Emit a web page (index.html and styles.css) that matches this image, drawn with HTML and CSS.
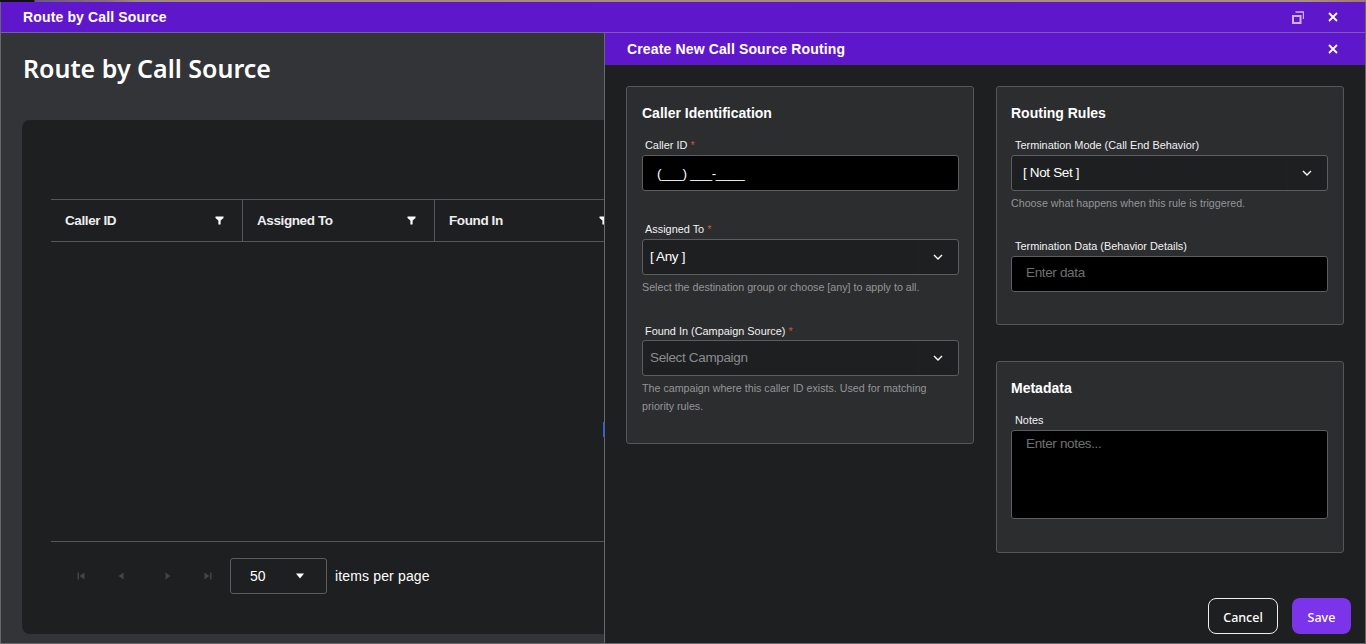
FILE: index.html
```html
<!DOCTYPE html>
<html lang="en">

<head>
    <meta charset="UTF-8">
    <meta name="viewport" content="width=device-width, initial-scale=1.0">
    <title>Route by Call Source</title>
    <link rel="stylesheet" href="styles.css">
</head>

<body>
    <div class="top-strip"></div>
    <div class="window">
        <!-- Window title bar -->
        <div class="title-bar">
            <span class="title-text">Route by Call Source</span>
            <div class="title-actions">
                <svg class="icon-restore" width="12" height="13" viewBox="0 0 12 13" fill="none" stroke="#cbb4f0">
                    <rect x="1" y="5" width="7.5" height="7" stroke-width="2"></rect>
                    <path d="M3.5 1H11.5V8" stroke-width="1.4"></path>
                </svg>
                <svg class="icon-close" width="10" height="10" viewBox="0 0 10 10" fill="none" stroke="#fff" stroke-width="1.8">
                    <path d="M1 1L9 9M9 1L1 9"></path>
                </svg>
            </div>
        </div>

        <div class="window-body">
            <!-- Page behind the panel -->
            <div class="page">
                <h1 class="page-title">Route by Call Source</h1>
                <div class="table-card">
                    <div class="table-head">
                        <div class="head-cell"><span>Caller ID</span>
                            <svg width="9" height="9" viewBox="0 0 9 9" fill="#fff"><path d="M0.5 0.5H8.5V2L5.6 4.6V8.5H3.4V4.6L0.5 2Z"></path></svg>
                        </div>
                        <div class="head-cell"><span>Assigned To</span>
                            <svg width="9" height="9" viewBox="0 0 9 9" fill="#fff"><path d="M0.5 0.5H8.5V2L5.6 4.6V8.5H3.4V4.6L0.5 2Z"></path></svg>
                        </div>
                        <div class="head-cell"><span>Found In</span>
                            <svg width="9" height="9" viewBox="0 0 9 9" fill="#fff"><path d="M0.5 0.5H8.5V2L5.6 4.6V8.5H3.4V4.6L0.5 2Z"></path></svg>
                        </div>
                    </div>
                    <div class="table-empty"></div>
                    <div class="pager">
                        <div class="pager-btns">
                            <svg width="8" height="8" viewBox="0 0 8 8" fill="#444"><path d="M0.5 0.5H2V7.5H0.5ZM7.5 0.5V7.5L2.5 4Z"></path></svg>
                            <svg width="8" height="8" viewBox="0 0 8 8" fill="#444"><path d="M6.5 0.5V7.5L1.5 4Z"></path></svg>
                            <svg class="pager-next" width="8" height="8" viewBox="0 0 8 8" fill="#444"><path d="M1.5 0.5V7.5L6.5 4Z"></path></svg>
                            <svg width="8" height="8" viewBox="0 0 8 8" fill="#444"><path d="M6 0.5H7.5V7.5H6ZM0.5 0.5V7.5L5.5 4Z"></path></svg>
                        </div>
                        <div class="page-size">
                            <span>50</span>
                            <svg width="8" height="6" viewBox="0 0 8 6" fill="#fff"><path d="M0 0.5H8L4 5.5Z"></path></svg>
                        </div>
                        <span class="pager-label">items per page</span>
                    </div>
                </div>
            </div>

            <!-- Slide over panel -->
            <div class="panel">
                <div class="panel-head">
                    <span class="title-text">Create New Call Source Routing</span>
                    <svg class="icon-close" width="10" height="10" viewBox="0 0 10 10" fill="none" stroke="#fff" stroke-width="1.8">
                        <path d="M1 1L9 9M9 1L1 9"></path>
                    </svg>
                </div>
                <div class="panel-content">
                    <div class="panel-col">
                        <section class="form-card card-caller">
                            <h3>Caller Identification</h3>
                            <div class="field">
                                <label>Caller ID <b>*</b></label>
                                <div class="input masked">(___) ___-____</div>
                            </div>
                            <div class="field field-assigned">
                                <label>Assigned To <b>*</b></label>
                                <div class="select">
                                    <span>[ Any ]</span>
                                    <div class="select-arrow"><svg width="10" height="6" viewBox="0 0 10 6" fill="none" stroke="#fff" stroke-width="1.4"><path d="M1 1L5 5L9 1"></path></svg></div>
                                </div>
                                <p class="hint">Select the destination group or choose [any] to apply to all.</p>
                            </div>
                            <div class="field field-found">
                                <label>Found In (Campaign Source) <b>*</b></label>
                                <div class="select">
                                    <span class="placeholder">Select Campaign</span>
                                    <div class="select-arrow"><svg width="10" height="6" viewBox="0 0 10 6" fill="none" stroke="#fff" stroke-width="1.4"><path d="M1 1L5 5L9 1"></path></svg></div>
                                </div>
                                <p class="hint">The campaign where this caller ID exists. Used for matching priority rules.</p>
                            </div>
                        </section>
                    </div>
                    <div class="panel-col panel-col-right">
                        <section class="form-card card-rules">
                            <h3>Routing Rules</h3>
                            <div class="field">
                                <label>Termination Mode (Call End Behavior)</label>
                                <div class="select select-wide">
                                    <span>[ Not Set ]</span>
                                    <div class="select-arrow"><svg width="10" height="6" viewBox="0 0 10 6" fill="none" stroke="#fff" stroke-width="1.4"><path d="M1 1L5 5L9 1"></path></svg></div>
                                </div>
                                <p class="hint">Choose what happens when this rule is triggered.</p>
                            </div>
                            <div class="field field-data">
                                <label>Termination Data (Behavior Details)</label>
                                <div class="input placeholder">Enter data</div>
                            </div>
                        </section>
                        <section class="form-card card-meta">
                            <h3>Metadata</h3>
                            <div class="field">
                                <label>Notes</label>
                                <div class="input textarea placeholder">Enter notes...</div>
                            </div>
                        </section>
                    </div>
                </div>
                <div class="panel-foot">
                    <button class="btn btn-cancel">Cancel</button>
                    <button class="btn btn-save">Save</button>
                </div>
            </div>
            <div class="panel-sliver"></div>
        </div>
    </div>
</body>

</html>
```

FILE: styles.css
```css
* {
    margin: 0;
    padding: 0;
    box-sizing: border-box;
}

body {
    width: 1366px;
    height: 644px;
    overflow: hidden;
    background-color: #333438;
    color: #fff;
    font-family: "Liberation Sans", Arial, sans-serif;
}

.top-strip {
    height: 2px;
    background: linear-gradient(to right, #111 0, #111 34px, #6b5a80 35px, #8a6f7c 110px, #a08a78 135px, #a89180 1300px, #a07a70 100%);
}

.window {
    height: 642px;
    display: flex;
    flex-direction: column;
    border: 1px solid #68696c;
    border-top: none;
}

.title-bar {
    height: 31px;
    flex: none;
    display: flex;
    align-items: center;
    justify-content: space-between;
    padding: 0 27px 0 22px;
    background-color: #5f17cb;
    border-bottom: 1px solid #7a5bb0;
}

.title-text {
    font-size: 14px;
    font-weight: bold;
    letter-spacing: 0.14px;
}

.title-actions {
    display: flex;
    align-items: center;
    gap: 24px;
}

.window-body {
    flex: 1;
    position: relative;
    min-height: 0;
}

.page {
    height: 100%;
    padding: 19px 21px 9px 22px;
    display: flex;
    flex-direction: column;
}

.page-title {
    font-family: "Noto Sans", sans-serif;
    font-size: 25px;
    font-weight: 600;
    line-height: 32px;
    margin-bottom: 36px;
}

.table-card {
    flex: 1;
    margin-left: -1px;
    background-color: #1e1f21;
    border-radius: 8px;
    padding: 79px 29px 0;
    display: flex;
    flex-direction: column;
}

.table-head {
    height: 43px;
    flex: none;
    display: flex;
    border-top: 1px solid #55565a;
    border-bottom: 1px solid #55565a;
}

.head-cell {
    width: 192px;
    display: flex;
    align-items: center;
    justify-content: space-between;
    padding: 0 18px 1px 14px;
    border-right: 1px solid #55565a;
    font-size: 13.5px;
    font-weight: bold;
    letter-spacing: -0.4px;
    color: #eee;
}

.table-empty {
    flex: 1;
}

.pager {
    height: 93px;
    flex: none;
    display: flex;
    align-items: flex-start;
    padding-top: 16px;
    border-top: 1px solid #55565a;
}

.pager-btns {
    width: 179px;
    height: 36px;
    display: flex;
    align-items: center;
    gap: 32px;
    padding-left: 26px;
}

.pager-next {
    margin-left: 7px;
}

.page-size {
    width: 97px;
    height: 36px;
    display: flex;
    align-items: center;
    justify-content: space-between;
    padding: 0 22px 0 19px;
    border: 1px solid #5c5d60;
    border-radius: 3px;
    font-size: 14px;
}

.pager-label {
    font-size: 14px;
    letter-spacing: 0.15px;
    line-height: 36px;
    margin-left: 8px;
}

.panel {
    position: absolute;
    top: 0;
    left: 603px;
    right: 0;
    bottom: 0;
    display: flex;
    flex-direction: column;
    background-color: #1e1f21;
    border-left: 1px solid #68696c;
}

.panel-head {
    height: 32px;
    flex: none;
    display: flex;
    align-items: center;
    justify-content: space-between;
    padding: 0 27px 0 22px;
    background-color: #5f17cb;
}

.panel-content {
    flex: 1;
    display: flex;
    gap: 22px;
    padding: 21px 0 0 21px;
}

.panel-col {
    width: 348px;
    flex: none;
    display: flex;
    flex-direction: column;
    gap: 36px;
}

.form-card {
    padding: 18px 14px 0 15px;
    background-color: #2c2d2f;
    border: 1px solid #55565a;
    border-radius: 3px;
}

.panel-col-right .form-card {
    padding: 18px 15px 0 14px;
}

.card-caller {
    height: 358px;
}

.card-rules {
    height: 239px;
}

.card-meta {
    height: 192px;
}

.form-card h3 {
    font-size: 14px;
    line-height: 16px;
    font-weight: bold;
    margin-bottom: 18px;
}

.field label {
    display: block;
    font-size: 10.9px;
    line-height: 12px;
    padding-left: 3px;
    margin-bottom: 4px;
    color: #f2f2f2;
}

.panel-col-right .field label {
    padding-left: 4px;
}

.field label b {
    color: #d0503f;
    font-weight: normal;
}

.field-assigned {
    margin-top: 32px;
}

.field-found {
    margin-top: 29px;
}

.field-found label {
    margin-bottom: 3px;
}

.field-data {
    margin-top: 28px;
}

.input {
    height: 36px;
    display: flex;
    align-items: center;
    padding: 0 14px;
    background-color: #000;
    border: 1px solid #5c5d60;
    border-radius: 3px;
    font-size: 13.5px;
    letter-spacing: -0.35px;
}

.input.placeholder {
    padding-bottom: 3px;
    color: #6f7072;
}

.textarea {
    height: 89px;
    align-items: flex-start;
    padding-top: 5px;
}

.select {
    height: 36px;
    display: flex;
    align-items: center;
    justify-content: space-between;
    padding-left: 7px;
    background-color: #1e1f21;
    border: 1px solid #5c5d60;
    border-radius: 3px;
    font-size: 13.5px;
    letter-spacing: -0.35px;
}

.select > span {
    padding-bottom: 2px;
}

.select-wide {
    padding-left: 11px;
}

.select .placeholder {
    color: #8a8b8d;
}

.select-arrow {
    width: 40px;
    height: 34px;
    display: flex;
    align-items: center;
    justify-content: center;
    padding-right: 1px;
    border-left: 1px solid #202123;
}

.hint {
    margin-top: 3px;
    font-size: 10.7px;
    line-height: 18px;
    color: #949597;
}

.panel-foot {
    display: flex;
    justify-content: flex-end;
    gap: 14px;
    padding: 0 14px 9px 0;
}

.btn {
    height: 36px;
    padding-top: 2px;
    border-radius: 8px;
    font-family: "Noto Sans", sans-serif;
    font-size: 12.5px;
    font-weight: 500;
    color: #fff;
}

.btn-cancel {
    width: 70px;
    background-color: #1e1f21;
    border: 1px solid #eee;
}

.btn-save {
    width: 59px;
    background-color: #7c34ea;
    border: none;
}

.panel-sliver {
    position: absolute;
    left: 602px;
    top: 389px;
    width: 2px;
    height: 15px;
    background-color: #3f62b8;
}
```
